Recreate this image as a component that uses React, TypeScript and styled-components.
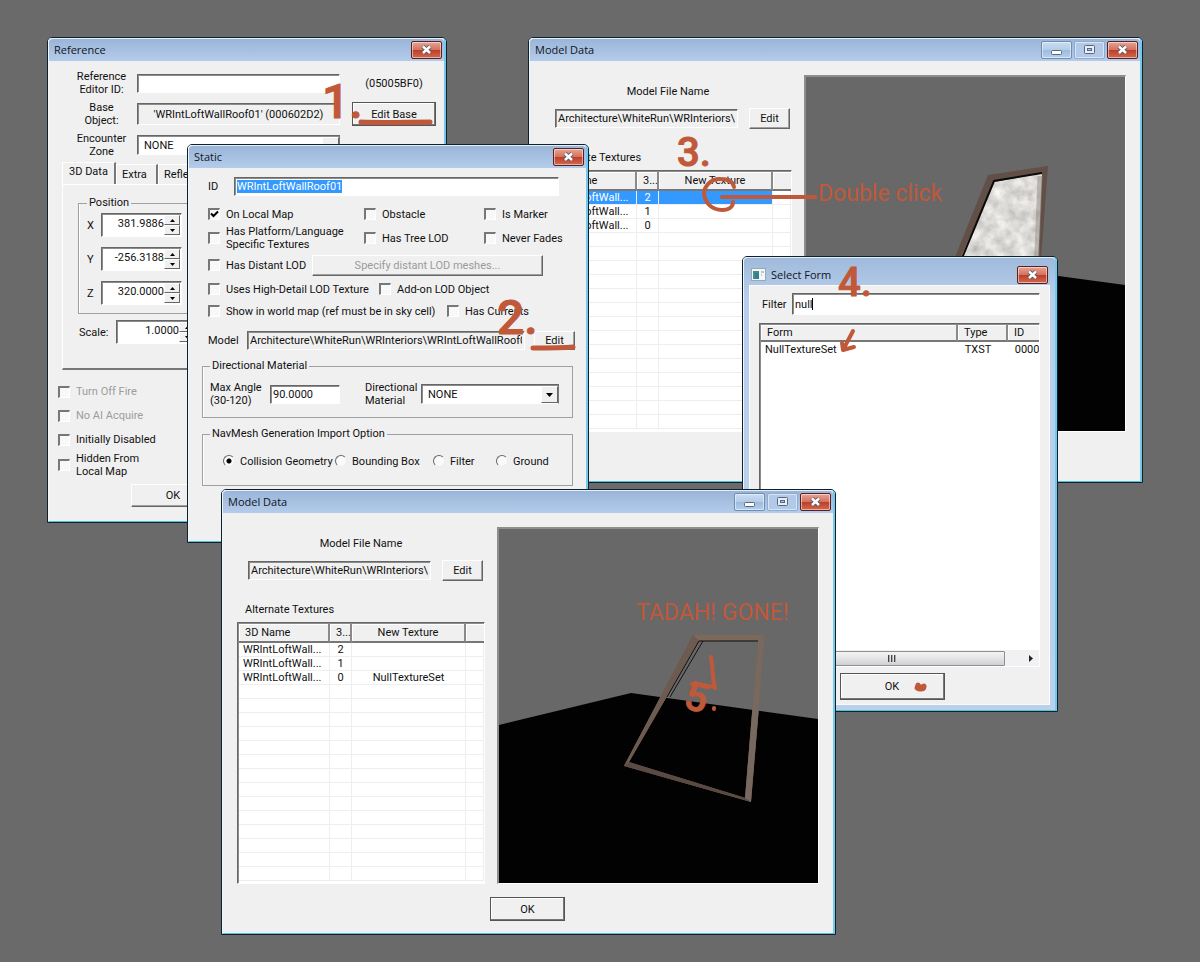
import React, { useEffect, useRef } from "react";
import styled, { createGlobalStyle, css } from "styled-components";

const ink = "#c0583a";

const GlobalStyle = createGlobalStyle`
  * { box-sizing: border-box; }
  body {
    margin: 0;
    background: #6a6a6a;
    color: #111;
    font: 11px/13px Roboto, "Liberation Sans", sans-serif;
  }
  button, input, select, table { font: inherit; color: inherit; }
  input, button, select { margin: 0; border-radius: 0; outline: none; }
  fieldset { margin: 0; min-width: 0; }
`;

const Desktop = styled.main`
  position: relative;
  min-height: 100vh;
  overflow: hidden;
`;

/* ---------- window chrome ---------- */

const Frame = styled.section<{ $x: number; $y: number; $w: number }>`
  position: absolute;
  left: ${(p) => p.$x}px;
  top: ${(p) => p.$y}px;
  width: ${(p) => p.$w}px;
  border: 1px solid #0d222c;
  border-radius: 5px 5px 0 0;
  background: #f0f0f0;
`;

const Inner = styled.div<{ $glass?: boolean }>`
  border: 1px solid #eef6fc;
  border-right: 2px solid #74c8ee;
  border-bottom-color: #4cc3d6;
  border-top: 0;
  border-radius: 4px 4px 0 0;
  background: ${(p) => (p.$glass ? "linear-gradient(#9fb9db, #b8cfeb 40px, #b9d1ea)" : "#f0f0f0")};
`;

const TitleBar = styled.header<{ $tall?: boolean }>`
  display: flex;
  align-items: center;
  gap: 5px;
  height: ${(p) => (p.$tall ? 28 : 23)}px;
  padding: ${(p) => (p.$tall ? "6px 7px 0 7px" : "0 2px 0 5px")};
  border-top: 1px solid #e4eef9;
  border-radius: 4px 4px 0 0;
  background: ${(p) => (p.$tall ? "none" : "linear-gradient(#9ab5d8, #b4cceb)")};
`;

const Title = styled.h2`
  flex: 1;
  margin: 0;
  font: 11px/16px "Open Sans", "Noto Sans", sans-serif;
  color: #10141c;
`;

const CaptionButton = styled.button<{ $kind: "min" | "max" | "close" }>`
  display: flex;
  align-items: center;
  justify-content: center;
  width: 31px;
  height: 18px;
  padding: 0;
  border: 1px solid #6f8db3;
  border-radius: 2px;
  background: linear-gradient(#c9dcf2, #b3cbe8 50%, #9dbadd 50%, #b5cfec);
  box-shadow: inset 0 0 0 1px rgba(255, 255, 255, 0.5);
  ${(p) => p.$kind === "max" && css`border-color: #8fabcf; background: #b2cae8;`}
  ${(p) =>
    p.$kind === "close" &&
    css`
      border-color: #5a2020;
      background: linear-gradient(#e6a493, #d3705c 50%, #bb3d27 50%, #cf6a4e);
    `}
`;

const CaptionGlyph = ({ kind }: { kind: "min" | "max" | "close" }) => (
  <svg width="13" height="12" viewBox="0 0 13 12" aria-hidden="true">
    {kind === "min" && <rect x="1.5" y="6.5" width="10" height="4" rx="1" fill="#fff" stroke="#566680" />}
    {kind === "max" && (
      <>
        <rect x="1.5" y="1.5" width="10" height="8" rx="1" fill="#e8eef6" stroke="#566680" />
        <rect x="4.5" y="4.5" width="4" height="2" fill="#b2cae8" stroke="#566680" />
      </>
    )}
    {kind === "close" && (
      <>
        <path d="M3 2.5 L10 9 M10 2.5 L3 9" stroke="#56586a" strokeWidth="4.4" />
        <path d="M3 2.5 L10 9 M10 2.5 L3 9" stroke="#fff" strokeWidth="2.4" />
      </>
    )}
  </svg>
);

const Caption = ({ kind }: { kind: "min" | "max" | "close" }) => (
  <CaptionButton $kind={kind} aria-label={kind}>
    <CaptionGlyph kind={kind} />
  </CaptionButton>
);

const CaptionGroup = styled.div`
  display: flex;
  gap: 2px;
`;

/* ---------- controls ---------- */

const sunken = css`
  border: 1px solid #fff;
  border-top-color: #666;
  border-left-color: #666;
  box-shadow: inset 1px 1px 0 #8c8c8c;
`;

const TextBox = styled.input<{ $w?: number; $h?: number; $grey?: boolean; $align?: string }>`
  width: ${(p) => (p.$w ? `${p.$w}px` : "100%")};
  height: ${(p) => p.$h ?? 19}px;
  padding: 0 2px;
  text-align: ${(p) => p.$align ?? "left"};
  background: ${(p) => (p.$grey ? "#f0f0f0" : "#fff")};
  ${sunken}
  &::selection { background: #3399ff; color: #fff; }
`;

const PushButton = styled.button<{ $w: number; $h?: number; $default?: boolean }>`
  width: ${(p) => p.$w}px;
  height: ${(p) => p.$h ?? 21}px;
  padding: 0;
  border: 1px solid #fff;
  border-right-color: #666;
  border-bottom-color: #666;
  background: #f0f0f0;
  box-shadow: inset -1px -1px 0 #a0a0a0;
  &:disabled { color: #9a9a9a; }
  ${(p) =>
    p.$default &&
    css`
      border-color: #555;
      box-shadow: inset -1px -1px 0 #777, inset 1px 1px 0 #fff;
    `}
`;

const TickLabel = styled.label<{ $off?: boolean }>`
  display: flex;
  align-items: center;
  gap: 6px;
  white-space: pre-line;
  color: ${(p) => (p.$off ? "#9c9c9c" : "inherit")};
`;

const TickInput = styled.input`
  appearance: none;
  flex: none;
  width: 12px;
  height: 12px;
  background: #f8f8f8;
  border: 2px solid #777;
  border-right: 1px solid #fff;
  border-bottom: 1px solid #fff;
`;

const TickHolder = styled.span`
  position: relative;
  display: flex;
  svg { position: absolute; left: 2px; top: 2px; }
`;

const Tick = ({ label, checked, disabled }: { label: string; checked?: boolean; disabled?: boolean }) => (
  <TickLabel $off={disabled}>
    <TickHolder>
      <TickInput type="checkbox" defaultChecked={checked} disabled={disabled} />
      {checked && (
        <svg width="9" height="9" viewBox="0 0 9 9" aria-hidden="true">
          <path d="M1 3.5 L3.5 6 L8 1.5" fill="none" stroke="#000" strokeWidth="2" />
        </svg>
      )}
    </TickHolder>
    {label}
  </TickLabel>
);

const RadioInput = styled.input`
  appearance: none;
  flex: none;
  width: 12px;
  height: 12px;
  margin: 0;
  border: 1px solid;
  border-color: #666 #eee #eee #666;
  border-radius: 50%;
  background: #fafafa;
  &:checked { background: radial-gradient(circle, #000 2px, #fafafa 3px); }
`;

const SelectHolder = styled.span<{ $w: number }>`
  position: relative;
  display: block;
  width: ${(p) => p.$w}px;
  select {
    appearance: none;
    display: block;
    width: 100%;
    height: 20px;
    padding: 0 6px;
    background: #fff;
    ${sunken}
    border-right-color: #777;
  }
  svg {
    position: absolute;
    right: 1px;
    top: 2px;
    width: 17px;
    height: 17px;
    background: #f0f0f0;
    border: 1px solid #fff;
    border-right-color: #666;
    border-bottom-color: #666;
    pointer-events: none;
  }
`;

const Select = ({ id, w }: { id: string; w: number }) => (
  <SelectHolder $w={w}>
    <select id={id} defaultValue="NONE">
      <option>NONE</option>
    </select>
    <svg viewBox="0 0 15 15" aria-hidden="true">
      <path d="M4 6h7l-3.500 4z" fill="#000" />
    </svg>
  </SelectHolder>
);

/* ---------- Reference window ---------- */

const ReferenceBody = styled.div`
  padding: 9px 8px 14px 8px;
`;

const RefGrid = styled.div`
  display: grid;
  grid-template-columns: 61px 203px 98px;
  grid-auto-rows: 26px;
  align-items: center;
  justify-items: center;
  row-gap: 5px;
  column-gap: 5px;
  padding-left: 14px;
  text-align: center;
  & > :nth-child(3n + 1) { white-space: pre-line; }
`;

const Tabs = styled.div`
  display: flex;
  align-items: flex-end;
  height: 23px;
  margin: 3px 0 0 5px;
`;

const Tab = styled.button<{ $active?: boolean }>`
  height: ${(p) => (p.$active ? 22 : 20)}px;
  padding: ${(p) => (p.$active ? "0 6px 4px" : "0 7px 0 5px")};
  min-width: ${(p) => (p.$active ? 54 : 42)}px;
  text-align: left;
  border: 1px solid #fff;
  border-right: 2px solid #777;
  border-bottom: 0;
  background: #f0f0f0;
`;

const TabPanel = styled.div`
  height: 186px;
  margin-left: 5px;
  padding: 11px 12px 0 15px;
  border: 1px solid #fff;
  border-bottom: 2px solid #777;
`;

const Group = styled.fieldset<{ $h: number; $pad: string }>`
  height: ${(p) => p.$h}px;
  padding: ${(p) => p.$pad};
  border: 1px solid #a0a0a0;
  box-shadow: inset 1px 0 0 #fff;
  legend { padding: 0 2px; margin-left: 0; line-height: 14px; }
`;

const SpinRow = styled.div<{ $label: number }>`
  display: grid;
  grid-template-columns: ${(p) => p.$label}px 81px;
  align-items: center;
`;

const SpinHolder = styled.span`
  display: grid;
  grid-template-columns: 1fr 16px;
  height: 24px;
  padding: 1px;
  background: #fff;
  ${sunken}
  input {
    min-width: 0;
    padding: 0 0 3px;
    border: 0;
    text-align: right;
    background: #fff;
  }
`;

const Arrows = styled.span`
  display: grid;
  grid-template-rows: 1fr 1fr;
  button {
    display: flex;
    align-items: center;
    justify-content: center;
    min-height: 0;
    padding: 0;
    background: #f0f0f0;
    border: 1px solid #fff;
    border-right-color: #666;
    border-bottom-color: #666;
  }
`;

const Spin = ({ label, value, w, id }: { label: string; value: string; w: number; id: string }) => (
  <SpinRow $label={w}>
    <label htmlFor={id}>{label}</label>
    <SpinHolder>
      <input id={id} defaultValue={value} />
      <Arrows>
        <button aria-label={`${label} up`}>
          <svg width="5" height="3" viewBox="0 0 5 3"><path d="M0 3L2.500 0L5 3z" /></svg>
        </button>
        <button aria-label={`${label} down`}>
          <svg width="5" height="3" viewBox="0 0 5 3"><path d="M0 0L2.500 3L5 0z" /></svg>
        </button>
      </Arrows>
    </SpinHolder>
  </SpinRow>
);

const Stack = styled.div<{ $gap: number; $pad?: string }>`
  display: flex;
  flex-direction: column;
  gap: ${(p) => p.$gap}px;
  padding: ${(p) => p.$pad ?? "0"};
`;

const ReferenceWindow = () => (
  <Frame $x={47} $y={37} $w={400}>
    <Inner>
      <TitleBar>
        <Title>Reference</Title>
        <Caption kind="close" />
      </TitleBar>
      <ReferenceBody>
        <RefGrid>
          <label htmlFor="editor-id">{"Reference\nEditor ID:"}</label>
          <TextBox id="editor-id" />
          <span>(05005BF0)</span>
          <label htmlFor="base">{"Base\nObject:"}</label>
          <TextBox id="base" $h={22} $grey $align="center" readOnly value="'WRIntLoftWallRoof01' (000602D2)" />
          <PushButton $w={84} $h={24} $default>Edit Base</PushButton>
          <label htmlFor="zone">{"Encounter\nZone"}</label>
          <Select id="zone" w={203} />
        </RefGrid>
        <Tabs>
          <Tab $active>3D Data</Tab>
          <Tab>Extra</Tab>
          <Tab>Reflected By</Tab>
        </Tabs>
        <TabPanel>
          <Group $h={118} $pad="3px 8px 0">
            <legend>Position</legend>
            <Stack $gap={10}>
              <Spin id="px" label="X" value="381.9886" w={14} />
              <Spin id="py" label="Y" value="-256.3188" w={14} />
              <Spin id="pz" label="Z" value="320.0000" w={14} />
            </Stack>
          </Group>
          <Stack $gap={0} $pad="6px 1px">
            <Spin id="scale" label="Scale:" value="1.0000" w={37} />
          </Stack>
        </TabPanel>
        <Stack $gap={11} $pad="15px 1px 6px">
          <Tick label="Turn Off Fire" disabled />
          <Tick label="No AI Acquire" disabled />
          <Tick label="Initially Disabled" />
        </Stack>
        <Stack $gap={0} $pad="0 1px 6px">
          <Tick label={"Hidden From\nLocal Map"} />
        </Stack>
        <Stack $gap={0} $pad="0 74px">
          <PushButton $w={84} $h={23}>OK</PushButton>
        </Stack>
      </ReferenceBody>
    </Inner>
  </Frame>
);

/* ---------- Static window ---------- */

const StaticBody = styled.div`
  padding: 8px 12px 55px 13px;
`;

const Line = styled.div<{ $cols: string; $h: number; $pad?: string }>`
  display: grid;
  grid-template-columns: ${(p) => p.$cols};
  align-items: center;
  align-content: center;
  height: ${(p) => p.$h}px;
  padding: ${(p) => p.$pad ?? "0 0 0 6px"};
  white-space: pre-line;
`;

const EditSlot = styled.span`
  display: flex;
  justify-content: flex-end;
`;

const RadioLabel = styled.label`
  display: flex;
  align-items: center;
  gap: 5px;
  white-space: nowrap;
`;

const importOptions = ["Collision Geometry", "Bounding Box", "Filter", "Ground"];

const StaticWindow = () => {
  const idRef = useRef<HTMLInputElement>(null);
  useEffect(() => {
    idRef.current?.focus();
    idRef.current?.select();
  }, []);
  return (
    <Frame $x={187} $y={144} $w={402}>
      <Inner>
        <TitleBar>
          <Title>Static</Title>
          <Caption kind="close" />
        </TitleBar>
        <StaticBody>
          <Line $cols="26px 325px" $h={26} $pad="0 0 6px 6px">
            <label htmlFor="static-id">ID</label>
            <TextBox id="static-id" ref={idRef} defaultValue="WRIntLoftWallRoof01" />
          </Line>
          <Line $cols="156px 120px 1fr" $h={24}>
            <Tick label="On Local Map" checked />
            <Tick label="Obstacle" />
            <Tick label="Is Marker" />
          </Line>
          <Line $cols="156px 120px 1fr" $h={24}>
            <Tick label={"Has Platform/Language\nSpecific Textures"} />
            <Tick label="Has Tree LOD" />
            <Tick label="Never Fades" />
          </Line>
          <Line $cols="104px 1fr" $h={30}>
            <Tick label="Has Distant LOD" />
            <PushButton $w={231} disabled>Specify distant LOD meshes...</PushButton>
          </Line>
          <Line $cols="171px 1fr" $h={18}>
            <Tick label="Uses High-Detail LOD Texture" />
            <Tick label="Add-on LOD Object" />
          </Line>
          <Line $cols="239px 1fr" $h={26}>
            <Tick label="Show in world map (ref must be in sky cell)" />
            <Tick label="Has Currents" />
          </Line>
          <Line $cols="39px 278px 50px" $h={32}>
            <label htmlFor="model">Model</label>
            <TextBox id="model" $grey readOnly value="Architecture\WhiteRun\WRInteriors\WRIntLoftWallRoof01.nif" />
            <EditSlot>
              <PushButton $w={41} $h={19}>Edit</PushButton>
            </EditSlot>
          </Line>
          <Stack $gap={9} $pad="3px 1px 0 0">
            <Group $h={59} $pad="7px">
              <legend>Directional Material</legend>
              <Line $cols="60px 95px 56px 138px" $h={28} $pad="0">
                <label htmlFor="angle">{"Max Angle\n(30-120)"}</label>
                <TextBox id="angle" $w={70} defaultValue="90.0000" />
                <label htmlFor="material">{"Directional\nMaterial"}</label>
                <Select id="material" w={138} />
              </Line>
            </Group>
            <Group $h={59} $pad="6px 7px">
              <legend>NavMesh Generation Import Option</legend>
              <Line $cols="112px 98px 63px 1fr" $h={28} $pad="0 0 0 13px">
                {importOptions.map((m, i) => (
                  <RadioLabel key={m}>
                    <RadioInput type="radio" name="navmesh" defaultChecked={i === 0} />
                    {m}
                  </RadioLabel>
                ))}
              </Line>
            </Group>
          </Stack>
        </StaticBody>
      </Inner>
    </Frame>
  );
};

/* ---------- Model Data windows ---------- */

const ModelBody = styled.div`
  padding: 14px 14px 12px 14px;
`;

const Columns = styled.div`
  display: grid;
  grid-template-columns: 248px 1fr;
  column-gap: 12px;
  height: 357px;
`;

const LeftColumn = styled.div`
  display: flex;
  flex-direction: column;
  padding-top: 10px;
`;

const Heading = styled.div<{ $center?: boolean }>`
  line-height: 14px;
  text-align: ${(p) => (p.$center ? "center" : "left")};
  padding-left: ${(p) => (p.$center ? 0 : 8)}px;
`;

const FileRow = styled.div`
  display: flex;
  align-items: center;
  justify-content: space-between;
  padding: 9px 2px 22px 11px;
`;

const ListBox = styled.div`
  flex: 1;
  margin-top: 5px;
  overflow: hidden;
  background: #fff;
  ${sunken}
  padding: 1px 0 0 1px;
`;

const Grid = styled.table<{ $lines?: boolean }>`
  width: 100%;
  table-layout: fixed;
  border-collapse: separate;
  border-spacing: 0;
  th, td {
    height: 14px;
    padding: 0 4px;
    overflow: hidden;
    white-space: nowrap;
    text-align: left;
    font-weight: 400;
    line-height: 13px;
  }
  th {
    height: ${(p) => (p.$lines ? 19 : 17)}px;
    padding: 0 6px;
    background: #f0f0f0;
    border-right: 2px solid #8a8a8a;
    border-bottom: 2px solid #777;
    box-shadow: inset 1px 1px 0 #fff;
  }
  th:last-child { border-right: 0; }
  td { border: 0 solid #eeeeee; }
  ${(p) =>
    p.$lines &&
    css`
      td { border-width: 0 1px 1px 0; }
      th:nth-child(n + 2), td:nth-child(n + 2) { text-align: center; }
    `}
`;

const Row = styled.tr<{ $picked?: boolean }>`
  ${(p) =>
    p.$picked &&
    css`
      td:nth-child(-n + 3) { background: #3399ff; color: #fff; }
    `}
`;

const Preview = styled.div`
  border: 2px solid #8e8e8e;
  border-right: 1px solid #fff;
  border-bottom: 1px solid #fff;
  background: #686868;
  svg { display: block; width: 100%; height: 100%; }
`;

const Footer = styled.div`
  display: flex;
  justify-content: center;
  padding: 13px 1px 0 0;
`;

const EmptyFrameScene = () => (
  <svg viewBox="0 0 319 354" preserveAspectRatio="none" aria-hidden="true">
    <path d="M0 196L132 164L319 190V354H0z" fill="#020202" />
    <path
      fillRule="evenodd"
      fill="#70604f"
      d="M194 106L266 106L252 273L125 237zM200 112L130 233L246 269L259 111z"
    />
    <path d="M194 106L266 106L259 111L200 112z" fill="#7b6a5c" />
    <path d="M125 237L252 273L247 269L130 233z" fill="#5a4a44" />
    <path d="M194 106L125 237L130 233L200 112z" fill="#6d5a50" />
    <path d="M266 106L252 273L246 269L259 111z" fill="#776860" />
    <path d="M259 112H200L168 168M204 112L171 168" fill="none" stroke="#111" />
  </svg>
);

const WallScene = () => (
  <svg viewBox="0 0 319 354" preserveAspectRatio="none" aria-hidden="true">
    <defs>
      <filter id="plaster" x="0" y="0" width="100%" height="100%">
        <feTurbulence type="fractalNoise" baseFrequency="0.09" numOctaves="5" seed="7" />
        <feColorMatrix values="0.6 0 0 0 0.42  0.6 0 0 0 0.41  0.6 0 0 0 0.39  0 0 0 0 1" />
        <feComposite in2="SourceGraphic" operator="in" />
      </filter>
    </defs>
    <path d="M0 208L170 188L319 208V354H0z" fill="#020202" />
    <path d="M182 98L242 89L233 210H137z" fill="#625048" />
    <path d="M188 105L236 96L231 210H142z" fill="#c4c0ba" filter="url(#plaster)" />
    <path d="M236 96L188 104L144 210" fill="none" stroke="#0c0a08" strokeWidth="2" />
    <path d="M234 99L230 200" fill="none" stroke="#8d867e" strokeWidth="5" opacity=".5" />
  </svg>
);

type ModelProps = { id: string; x: number; y: number; picked?: number; last: string; scene: React.ReactNode };

const ModelWindow = ({ id, x, y, picked, last, scene }: ModelProps) => (
  <Frame $x={x} $y={y} $w={615}>
    <Inner>
      <TitleBar>
        <Title>Model Data</Title>
        <CaptionGroup>
          <Caption kind="min" />
          <Caption kind="max" />
          <Caption kind="close" />
        </CaptionGroup>
      </TitleBar>
      <ModelBody>
        <Columns>
          <LeftColumn>
            <Heading $center as="label" htmlFor={id}>Model File Name</Heading>
            <FileRow>
              <TextBox id={id} $w={183} $grey readOnly value={"Architecture\\WhiteRun\\WRInteriors\\WRIntLoftWallRoof01.nif"} />
              <PushButton $w={41}>Edit</PushButton>
            </FileRow>
            <Heading>Alternate Textures</Heading>
            <ListBox>
              <Grid $lines>
                <colgroup>
                  <col width="91" />
                  <col width="22" />
                  <col width="114" />
                  <col />
                </colgroup>
                <thead>
                  <tr><th>3D Name</th><th>3...</th><th>New Texture</th><th /></tr>
                </thead>
                <tbody>
                  {Array.from({ length: 17 }, (_, i) => (
                    <Row key={i} $picked={picked === i}>
                      <td>{i < 3 && "WRIntLoftWall..."}</td>
                      <td>{i < 3 && 2 - i}</td>
                      <td>{i === 2 && last}</td>
                      <td />
                    </Row>
                  ))}
                </tbody>
              </Grid>
            </ListBox>
          </LeftColumn>
          <Preview>{scene}</Preview>
        </Columns>
        <Footer>
          <PushButton $w={75} $h={24} $default>OK</PushButton>
        </Footer>
      </ModelBody>
    </Inner>
  </Frame>
);

/* ---------- Select Form window ---------- */

const FormBody = styled.div`
  margin: 0 5px 5px 5px;
  padding: 7px 9px 4px 9px;
  background: #f0f0f0;
  border: 1px solid #f8fafd;
`;

const FilterRow = styled.div`
  display: grid;
  grid-template-columns: 30px 1fr;
  align-items: center;
  padding-left: 3px;
`;

const FilterField = styled.span`
  position: relative;
  display: block;
  input { display: block; }
`;

const Caret = styled.i`
  position: absolute;
  left: 20px;
  top: 5px;
  width: 1px;
  height: 12px;
  background: #000;
`;

const FormList = styled.div`
  display: flex;
  flex-direction: column;
  justify-content: space-between;
  height: 344px;
  margin-top: 8px;
  overflow: hidden;
  background: #fff;
  ${sunken}
  padding: 1px 0 0 1px;
`;

const ScrollBar = styled.div`
  display: grid;
  grid-template-columns: 17px 227px 1fr 17px;
  align-items: center;
  justify-items: center;
  height: 16px;
  background: #f1f1f3;
`;

const Thumb = styled.span`
  display: flex;
  align-items: center;
  justify-content: center;
  gap: 2px;
  width: 100%;
  height: 15px;
  border: 1px solid #8f8f8f;
  border-radius: 1px;
  background: linear-gradient(#f3f3f3, #e4e4e6 50%, #cfd0d3);
  i { width: 1px; height: 7px; background: #444; box-shadow: 1px 0 0 #aaa; }
`;

const FormFooter = styled.div`
  display: flex;
  justify-content: center;
  padding: 6px 15px 0 0;
`;

const SelectFormWindow = () => (
  <Frame $x={742} $y={256} $w={316}>
    <Inner $glass>
      <TitleBar $tall>
        <svg width="15" height="13" viewBox="0 0 15 13" aria-hidden="true">
          <rect x=".5" y=".5" width="14" height="12" fill="#f4f6f6" stroke="#9aa8b4" />
          <rect x="2" y="3" width="6" height="8" fill="#3f8f86" />
          <rect x="4" y="5" width="4" height="6" fill="#2f6fa5" opacity=".6" />
          <path d="M10 4h3M10 7h1" stroke="#8a949c" />
        </svg>
        <Title>Select Form</Title>
        <Caption kind="close" />
      </TitleBar>
      <FormBody>
        <FilterRow>
          <label htmlFor="filter">Filter</label>
          <FilterField>
            <TextBox id="filter" $h={22} defaultValue="null" />
            <Caret />
          </FilterField>
        </FilterRow>
        <FormList>
          <Grid>
            <colgroup>
              <col />
              <col width="50" />
              <col width="31" />
            </colgroup>
            <thead>
              <tr><th>Form</th><th>Type</th><th>ID</th></tr>
            </thead>
            <tbody>
              <tr><td>NullTextureSet</td><td>&nbsp;TXST</td><td>&nbsp;0000</td></tr>
            </tbody>
          </Grid>
          <ScrollBar>
            <span />
            <Thumb><i /><i /><i /></Thumb>
            <span />
            <svg width="4" height="7" viewBox="0 0 4 7" aria-hidden="true"><path d="M0 0L4 3.500L0 7z" fill="#222" /></svg>
          </ScrollBar>
        </FormList>
        <FormFooter>
          <PushButton $w={105} $h={27} $default>OK</PushButton>
        </FormFooter>
      </FormBody>
    </Inner>
  </Frame>
);

/* ---------- red pen notes over the desktop ---------- */

const Note = styled.span<{ $x: number; $y: number; $size: number; $thick?: boolean; $turn?: number }>`
  position: absolute;
  left: ${(p) => p.$x}px;
  top: ${(p) => p.$y}px;
  font-size: ${(p) => p.$size}px;
  line-height: ${(p) => p.$size}px;
  font-weight: ${(p) => (p.$thick ? 500 : 400)};
  color: ${ink};
  white-space: nowrap;
  pointer-events: none;
  ${(p) => p.$turn && css`rotate: ${p.$turn}deg;`}
  ${(p) => p.$thick && css`-webkit-text-stroke: 1px ${ink};`}
`;

const PenLayer = styled.svg`
  position: absolute;
  left: 0;
  top: 0;
  pointer-events: none;
`;

const PenMarks = () => (
  <PenLayer width="1200" height="962" fill="none" stroke={ink} strokeWidth="4" strokeLinecap="round" strokeLinejoin="round" aria-hidden="true">
    <path d="M361 122C384 123 408 122 430 122" strokeWidth="5" />
    <path d="M533 348C548 348 562 348 573 347" strokeWidth="5" />
    <path d="M734 187C733 181 727 179 720 179C710 179 704 187 704 194C705 203 712 210 722 210C730 210 733 206 733 202" />
    <path d="M722 197H815" />
    <path d="M853 331L843 350M842 343L843 350L854 347" />
    <path d="M918 685L917 688C920 690 925 689 924 686L919 688" strokeWidth="5" />
    <path d="M711 657C713 668 712 678 715 688M714 708V709M715 687L692 684" />
  </PenLayer>
);

export default function App() {
  return (
    <Desktop>
      <GlobalStyle />
      <ReferenceWindow />
      <ModelWindow id="file-before" x={528} y={37} picked={0} last="" scene={<WallScene />} />
      <StaticWindow />
      <SelectFormWindow />
      <ModelWindow id="file-after" x={221} y={489} last="NullTextureSet" scene={<EmptyFrameScene />} />
      <PenMarks />
      <Note $x={322} $y={78} $size={48} $thick>1.</Note>
      <Note $x={497} $y={294} $size={48} $thick>2.</Note>
      <Note $x={677} $y={133} $size={40} $thick>3.</Note>
      <Note $x={838} $y={263} $size={40} $thick>4.</Note>
      <Note $x={685} $y={678} $size={40} $thick $turn={14}>5</Note>
      <Note $x={818} $y={182} $size={23}>Double click</Note>
      <Note $x={636} $y={601} $size={23}>TADAH! GONE!</Note>
    </Desktop>
  );
}
